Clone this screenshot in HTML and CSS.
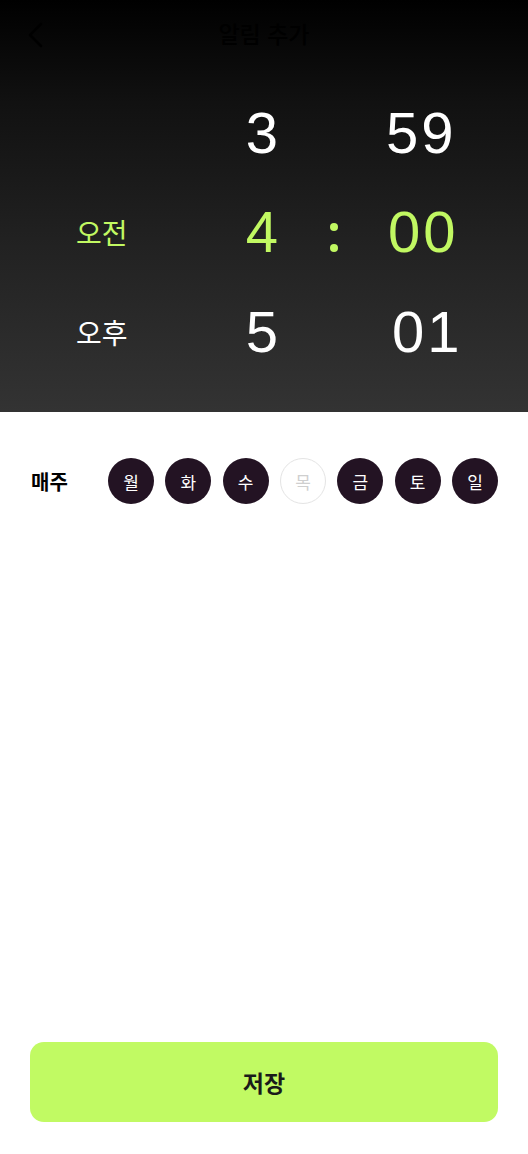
FILE: index.html
```html
<!DOCTYPE html>
<html lang="ko">
<head>
<meta charset="utf-8">
<link rel="stylesheet" href="styles.css">
</head>
<body>
<div class="screen">
  <section class="top">
    <header class="nav">
      <svg class="back" width="18" height="26" viewBox="0 0 18 26"><path d="M15 2 L4 13 L15 24" fill="none" stroke="#000" stroke-width="2.6" stroke-linecap="round" stroke-linejoin="round"/></svg>
      <h1 class="title">알림 추가</h1>
    </header>
    <div class="picker">
      <div class="cell ampm"></div>
      <div class="cell num hour">3</div>
      <div class="cell colon"></div>
      <div class="cell num min first">59</div>

      <div class="cell ampm active">오전</div>
      <div class="cell num hour active">4</div>
      <div class="cell colon active"><span class="dot"></span><span class="dot"></span></div>
      <div class="cell num min active">00</div>

      <div class="cell ampm">오후</div>
      <div class="cell num hour">5</div>
      <div class="cell colon"></div>
      <div class="cell num min last">01</div>
    </div>
  </section>
  <section class="repeat">
    <span class="label">매주</span>
    <div class="days">
      <span class="day">월</span>
      <span class="day">화</span>
      <span class="day">수</span>
      <span class="day off">목</span>
      <span class="day">금</span>
      <span class="day">토</span>
      <span class="day">일</span>
    </div>
  </section>
  <div class="spacer"></div>
  <footer class="bottom">
    <button class="save">저장</button>
  </footer>
</div>
</body>
</html>
```

FILE: styles.css
```css
* { box-sizing: border-box; }
html, body { margin: 0; padding: 0; }
body {
  width: 528px;
  height: 1154px;
  background: #fff;
  font-family: "Noto Sans CJK KR", "Noto Sans", sans-serif;
}
.screen {
  display: flex;
  flex-direction: column;
  height: 1154px;
}
.top {
  height: 412px;
  background: linear-gradient(180deg, #000 0%, #111 25%, #222 60%, #333 100%);
  display: flex;
  flex-direction: column;
}
.nav {
  height: 70px;
  padding-bottom: 4px;
  display: flex;
  align-items: center;
  justify-content: center;
  position: relative;
}
.back {
  position: absolute;
  left: 26px;
  top: 22px;
}
.title {
  margin: 0;
  font-size: 23px;
  font-weight: 500;
  color: #000;
}
.picker {
  margin-top: 13px;
  display: grid;
  grid-template-columns: 206px 112px 30px 180px;
  grid-template-rows: 100px 98px 102px;
  align-items: center;
}
.cell {
  display: flex;
  align-items: center;
  justify-content: center;
  color: #fff;
}
.ampm {
  font-size: 28px;
  font-weight: 400;
  justify-content: flex-start;
  padding-left: 76px;
}
.num {
  font-family: "Liberation Sans", Arial, sans-serif;
  font-size: 58px;
  line-height: 1;
}
.min {
  justify-content: flex-start;
  letter-spacing: 3px;
  padding-left: 40px;
}
.min.first { padding-left: 38px; }
.min.last { padding-left: 44px; }
.colon {
  flex-direction: column;
  gap: 13px;
  padding-top: 10px;
  padding-left: 2px;
}
.dot {
  width: 8px;
  height: 8px;
  border-radius: 50%;
  background: #c1f862;
}
.active { color: #c1f862; }

.repeat {
  display: flex;
  align-items: center;
  padding: 46px 30px 0 31px;
  height: 92px;
}
.label {
  font-size: 20px;
  font-weight: 700;
  color: #000;
  width: 77px;
  flex-shrink: 0;
}
.days {
  display: flex;
  gap: 11.33px;
}
.day {
  width: 46px;
  height: 46px;
  flex-shrink: 0;
  border-radius: 50%;
  background: #231323;
  color: #fff;
  font-size: 17px;
  display: flex;
  align-items: center;
  justify-content: center;
}
.day.off {
  background: #fff;
  color: #cfcfcf;
  border: 1.5px solid #e4e4e4;
}
.spacer { flex: 1; }
.bottom {
  padding: 0 30px 32px;
}
.save {
  width: 100%;
  height: 80px;
  border: none;
  border-radius: 14px;
  background: #c1fa63;
  font-family: "Noto Sans CJK KR", "Noto Sans", sans-serif;
  font-size: 23px;
  font-weight: 700;
  color: #1a1a1a;
}
```
